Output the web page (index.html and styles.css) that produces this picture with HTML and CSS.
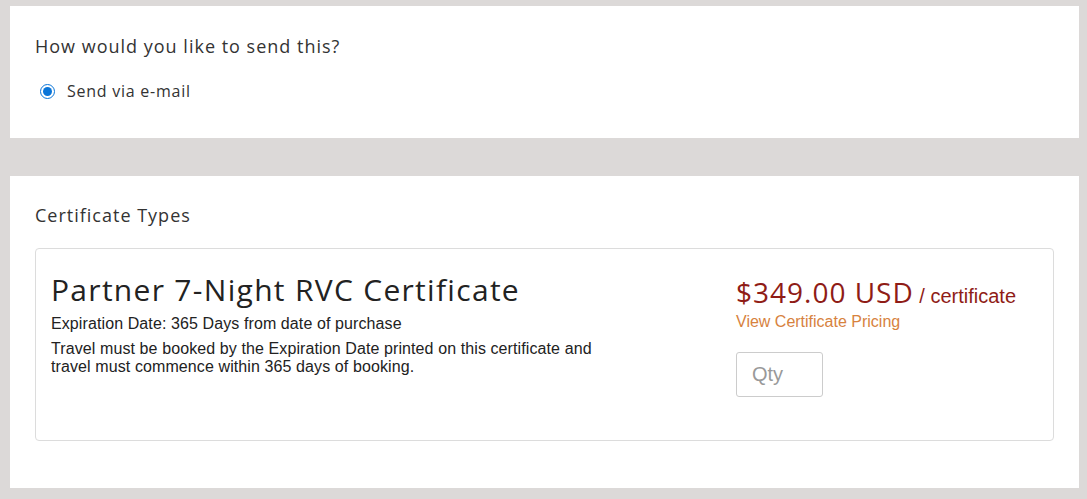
FILE: index.html
```html
<!DOCTYPE html>
<html>
<head>
<meta charset="utf-8">
<link rel="stylesheet" href="styles.css">
</head>
<body>
<div class="page">
  <section class="panel panel-send">
    <h2 class="panel-title">How would you like to send this?</h2>
    <label class="radio-row">
      <input type="radio" name="send" checked>
      <span class="radio-label">Send via e-mail</span>
    </label>
  </section>
  <section class="panel panel-types">
    <h2 class="panel-title">Certificate Types</h2>
    <div class="cert-card">
      <div class="cert-info">
        <h3 class="cert-name">Partner 7-Night RVC Certificate</h3>
        <p class="cert-exp">Expiration Date: 365 Days from date of purchase</p>
        <p class="cert-desc">Travel must be booked by the Expiration Date printed on this certificate and travel must commence within 365 days of booking.</p>
      </div>
      <div class="cert-buy">
        <div class="price"><span class="price-amount">$349.00 USD</span><span class="price-unit"> / certificate</span></div>
        <a class="pricing-link" href="#">View Certificate Pricing</a>
        <input class="qty" type="text" placeholder="Qty">
      </div>
    </div>
  </section>
</div>
</body>
</html>
```

FILE: styles.css
```css
html, body {
  margin: 0;
  padding: 0;
  background: #dcd9d8;
}
.page {
  padding: 6px 8px 11px 10px;
  display: flex;
  flex-direction: column;
  gap: 38px;
}
.panel {
  background: #fff;
  padding: 0 25px;
  box-sizing: border-box;
}
.panel-send {
  height: 132px;
  padding-top: 29px;
}
.panel-types {
  height: 312px;
  padding-top: 28px;
}
.panel-title {
  margin: 0;
  font-family: "Open Sans", sans-serif;
  font-weight: 400;
  font-size: 18px;
  line-height: 22px;
  color: #333;
  letter-spacing: 1px;
}
.radio-row {
  display: flex;
  align-items: center;
  margin-top: 23px;
  height: 22px;
}
.radio-row input {
  margin: 0 0 0 5px;
  width: 15px;
  height: 15px;
  accent-color: #0a75d8;
}
.radio-label {
  margin-left: 12px;
  font-family: "Open Sans", sans-serif;
  font-size: 16px;
  color: #333;
  letter-spacing: 0.75px;
}
.cert-card {
  margin-top: 22px;
  border: 1px solid #dcdcdc;
  border-radius: 4px;
  height: 193px;
  box-sizing: border-box;
  display: grid;
  grid-template-columns: 1fr 302px;
  padding: 22px 15px 0 15px;
}
.cert-info {
  max-width: 570px;
}
.cert-name {
  margin: 0;
  font-family: "Open Sans", sans-serif;
  font-weight: 400;
  font-size: 30px;
  line-height: 38px;
  color: #222;
  letter-spacing: 1.3px;
}
.cert-exp {
  margin: 6px 0 0;
  font-family: "Liberation Sans", Arial, sans-serif;
  font-size: 16px;
  line-height: 18px;
  color: #222;
  letter-spacing: 0.1px;
}
.cert-desc {
  margin: 7px 0 0;
  font-family: "Liberation Sans", Arial, sans-serif;
  font-size: 16px;
  line-height: 18px;
  color: #222;
  letter-spacing: 0.1px;
}
.cert-buy {
  display: flex;
  flex-direction: column;
  align-items: flex-start;
  padding-top: 7px;
}
.price {
  white-space: nowrap;
  line-height: 28px;
}
.price-amount {
  font-family: "Open Sans", sans-serif;
  font-size: 28px;
  color: #8f1c16;
  letter-spacing: 1px;
}
.price-unit {
  font-family: "Liberation Sans", Arial, sans-serif;
  font-size: 20px;
  color: #8f1c16;
}
.pricing-link {
  font-family: "Liberation Sans", Arial, sans-serif;
  font-size: 16px;
  line-height: 20px;
  color: #d7823e;
  text-decoration: none;
}
.qty {
  margin-top: 20px;
  width: 87px;
  height: 45px;
  box-sizing: border-box;
  border: 1px solid #ccc;
  border-radius: 3px;
  padding: 0 15px;
  font-family: "Liberation Sans", Arial, sans-serif;
  font-size: 20px;
}
.qty::placeholder {
  color: #999;
}
```
